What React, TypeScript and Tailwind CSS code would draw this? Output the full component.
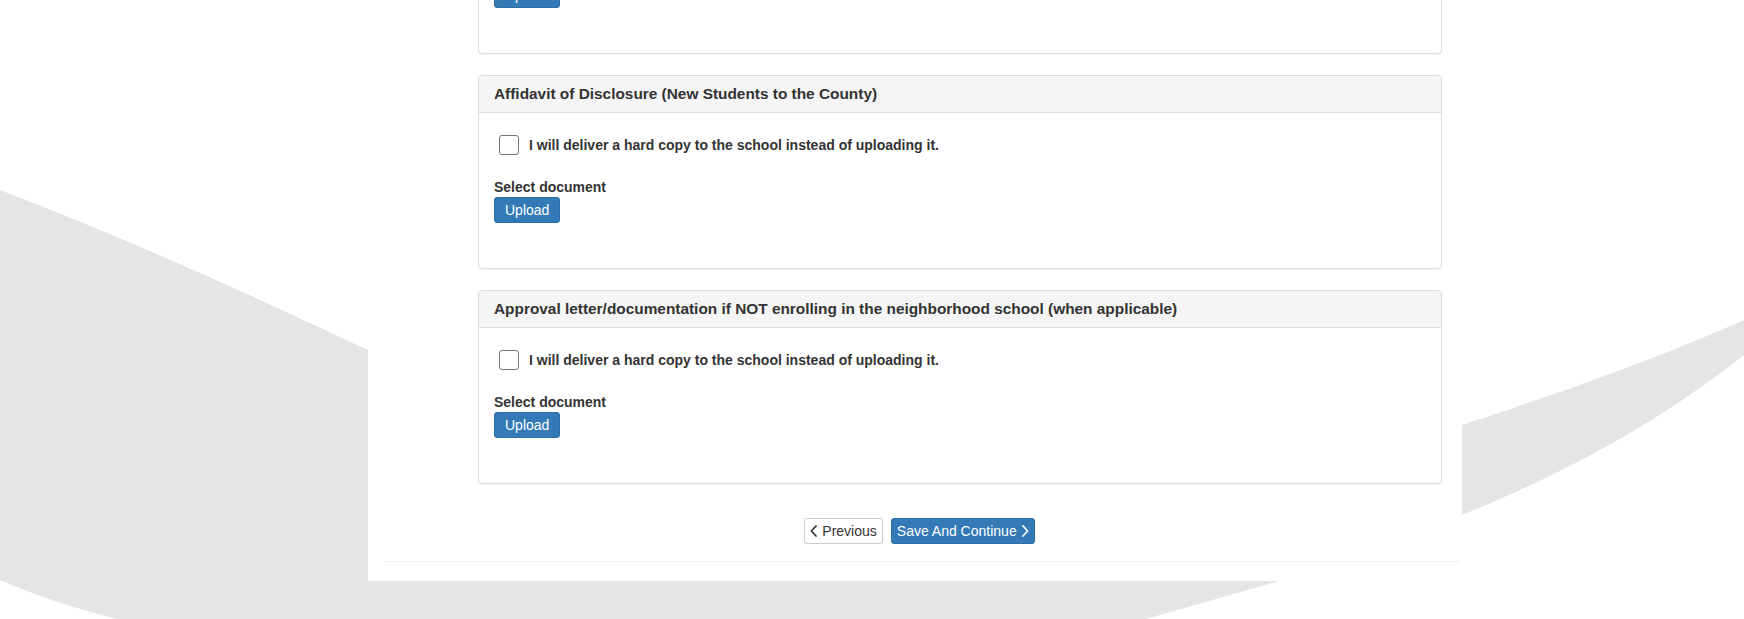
import React from 'react'

interface DocPanel {
  title: string
}

const panels: DocPanel[] = [
  { title: 'Proof of Residence' },
  { title: 'Affidavit of Disclosure (New Students to the County)' },
  { title: 'Approval letter/documentation if NOT enrolling in the neighborhood school (when applicable)' },
]

function ChevronLeft() {
  return (
    <svg className="w-[7px] h-[12px]" viewBox="0 0 7 12" fill="none" stroke="currentColor">
      <path strokeWidth="1.7" strokeLinecap="round" strokeLinejoin="round" d="M6 1L1.4 6 6 11" />
    </svg>
  )
}

function ChevronRight() {
  return (
    <svg className="w-[7px] h-[12px]" viewBox="0 0 7 12" fill="none" stroke="currentColor">
      <path strokeWidth="1.7" strokeLinecap="round" strokeLinejoin="round" d="M1 1l4.6 5L1 11" />
    </svg>
  )
}

function UploadPanel({ title }: DocPanel) {
  return (
    <div className="mb-[21px] rounded-[4px] border border-[#ddd] bg-white shadow-[0_1px_1px_rgba(0,0,0,0.05)]">
      {/* Heading */}
      <div className="h-[37px] px-[15px] flex items-center bg-[#f5f5f5] border-b border-[#ddd] rounded-t-[3px]">
        <h3 className="text-[15.4px] leading-[18px] font-bold text-[#333]">{title}</h3>
      </div>

      {/* Body */}
      <div className="p-[15px]">
        <label className="mt-[7px] h-[20px] flex items-center gap-[10px] cursor-pointer">
          <span className="ml-[5px] w-[20px] h-[20px] rounded-[3px] border border-[#767676] bg-white" />
          <span className="text-[14px] font-bold text-[#333]">
            I will deliver a hard copy to the school instead of uploading it.
          </span>
        </label>

        <div className="mt-[22px] text-[14px] leading-[20px] font-bold text-[#333]">Select document</div>
        <button className="h-[26px] px-[10px] rounded-[3px] bg-[#337ab7] border border-[#2e6da4] text-[14px] text-white">
          Upload
        </button>
        <div className="h-[30px]" />
      </div>
    </div>
  )
}

export default function App() {
  return (
    <div
      className="relative w-full h-[619px] overflow-hidden bg-white"
      style={{ fontFamily: '"Liberation Sans", Arial, Helvetica, sans-serif' }}
    >
      {/* Decorative background swoosh */}
      <svg className="absolute inset-0 w-[1744px] h-[619px]" viewBox="0 0 1744 619">
        <path
          fill="#e5e5e5"
          d="M0 190 C123 237 245 292 368 350 L915 560 L1462 425 C1556 394 1650 362 1744 320 L1744 355 C1589 477 1434 528 1279 581 L1146 619 L1146 640 L117 640 L117 619 Q50 602 0 580 Z"
        />
      </svg>

      {/* Page card (scrolled: content starts above the viewport) */}
      <div className="relative ml-[368px] w-[1094px] h-[581px] bg-white flex flex-col">
        <div className="-mt-[140px]">
          <div className="ml-[110px] mr-[20px]">
            {panels.map((p) => (
              <UploadPanel key={p.title} title={p.title} />
            ))}
          </div>

          {/* Navigation */}
          <div className="mt-[34px] flex justify-center gap-[8px] pl-[12px] pr-[3px]">
            <button className="h-[26px] px-[5px] flex items-center gap-[5px] rounded-[3px] border border-[#ccc] bg-white text-[14px] text-[#333]">
              <ChevronLeft />
              Previous
            </button>
            <button className="h-[26px] px-[5px] flex items-center gap-[5px] rounded-[3px] border border-[#2e6da4] bg-[#337ab7] text-[14px] text-white">
              Save And Continue
              <ChevronRight />
            </button>
          </div>

          <div className="mt-[17px] ml-[16px] mr-[3px] h-px bg-[#eee]" />
        </div>
      </div>
    </div>
  )
}
